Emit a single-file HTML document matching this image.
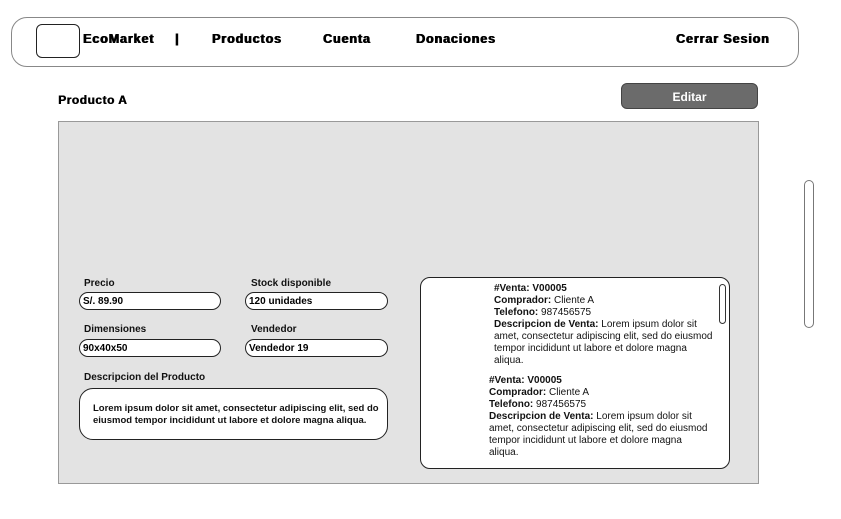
<!DOCTYPE html>
<html><head><style>
body{margin:0;width:841px;height:519px;background:#fff;position:relative;font-family:"Liberation Sans",sans-serif;overflow:hidden}
.a{position:absolute}
.nav{left:11px;top:17px;width:786px;height:48px;border:1px solid #888;border-radius:16px}
.nb{font-weight:900;font-size:12.5px;color:#000;top:32px;letter-spacing:0.9px;text-shadow:0.6px 0 0 #000,-0.3px 0 0 #000;white-space:nowrap}
.lbl{font-size:10px;font-weight:bold;color:#111}
.in{background:#fff;border:1.3px solid #222;border-radius:10px;height:18px;font-size:10px;font-weight:bold;line-height:18px;padding-left:3px;box-sizing:border-box}
.sale{font-size:10px;line-height:12px;color:#111;white-space:nowrap}
</style></head><body>
<div class="a nav"></div>
<div class="a" style="left:36px;top:24px;width:42px;height:32px;border:1px solid #222;border-radius:6px"></div>
<div class="a nb" style="left:83px">EcoMarket</div>
<div class="a nb" style="left:175px">|</div>
<div class="a nb" style="left:212px">Productos</div>
<div class="a nb" style="left:323px">Cuenta</div>
<div class="a nb" style="left:416px">Donaciones</div>
<div class="a nb" style="left:676px">Cerrar Sesion</div>
<div class="a" style="left:58px;top:93px;font-weight:900;font-size:12px;letter-spacing:0.5px;text-shadow:0.5px 0 0 #000">Producto A</div>
<div class="a" style="left:621px;top:83px;width:137px;height:26px;background:#6b6b6b;border:1px solid #444;border-radius:6px;color:#fff;font-weight:bold;font-size:12px;text-align:center;line-height:26px;box-sizing:border-box">Editar</div>
<div class="a" style="left:58px;top:121px;width:701px;height:363px;background:#e3e3e3;border:1px solid #999;box-sizing:border-box"></div>
<div class="a" style="left:804px;top:180px;width:8px;height:146px;border:1px solid #777;border-radius:5px"></div>
<div class="a lbl" style="left:84px;top:278px">Precio</div>
<div class="a lbl" style="left:251px;top:278px">Stock disponible</div>
<div class="a in" style="left:79px;top:292px;width:142px">S/. 89.90</div>
<div class="a in" style="left:245px;top:292px;width:143px">120 unidades</div>
<div class="a lbl" style="left:84px;top:324px">Dimensiones</div>
<div class="a lbl" style="left:251px;top:324px">Vendedor</div>
<div class="a in" style="left:79px;top:339px;width:142px">90x40x50</div>
<div class="a in" style="left:245px;top:339px;width:143px">Vendedor 19</div>
<div class="a lbl" style="left:84px;top:372px">Descripcion del Producto</div>
<div class="a" style="left:79px;top:388px;width:309px;height:52px;background:#fff;border:1.3px solid #222;border-radius:14px;box-sizing:border-box;padding:14px 0 0 13px;font-size:9.5px;font-weight:bold;line-height:12px;color:#111">Lorem ipsum dolor sit amet, consectetur adipiscing elit, sed do eiusmod tempor incididunt ut labore et dolore magna aliqua.</div>
<div class="a" style="left:420px;top:277px;width:310px;height:192px;background:#fff;border:1.3px solid #222;border-radius:10px;box-sizing:border-box"></div>
<div class="a" style="left:719px;top:284px;width:5px;height:38px;border:1px solid #333;border-radius:4px"></div>
<div class="a sale" style="left:494px;top:283px"><b>#Venta: V00005<br>Comprador:</b> Cliente A<br><b>Telefono:</b> 987456575<br><b>Descripcion de Venta:</b> Lorem ipsum dolor sit<br>amet, consectetur adipiscing elit, sed do eiusmod<br>tempor incididunt ut labore et dolore magna<br>aliqua.</div>
<div class="a sale" style="left:489px;top:375px"><b>#Venta: V00005<br>Comprador:</b> Cliente A<br><b>Telefono:</b> 987456575<br><b>Descripcion de Venta:</b> Lorem ipsum dolor sit<br>amet, consectetur adipiscing elit, sed do eiusmod<br>tempor incididunt ut labore et dolore magna<br>aliqua.</div>
</body></html>
